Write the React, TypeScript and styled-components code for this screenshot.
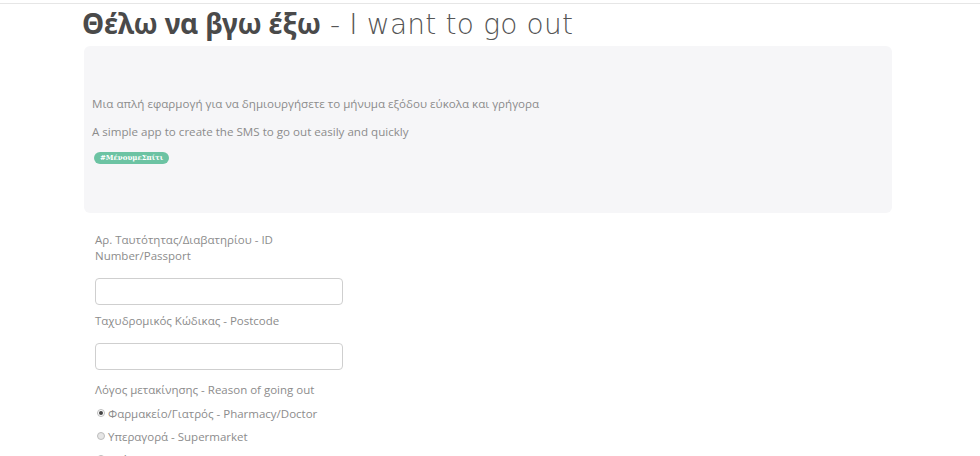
import styled, { createGlobalStyle } from 'styled-components';

const GlobalStyle = createGlobalStyle`
  html, body {
    margin: 0;
    padding: 0;
    background: #fff;
    font-family: 'Open Sans', 'Noto Sans', sans-serif;
  }
`;

const TopLine = styled.div`
  height: 3px;
  border-bottom: 1px solid #e6e6e6;
`;

const Page = styled.div`
  padding: 0 88px 0 84px;
`;

const Title = styled.h1`
  margin: 1px 0 0 -2px;
  font-family: 'DejaVu Sans', 'Noto Sans', sans-serif;
  font-size: 28px;
  line-height: 36px;
  font-weight: 200;
  color: #555;
  letter-spacing: 0.2px;
`;

const TitleStrong = styled.span`
  font-family: 'Noto Sans', sans-serif;
  font-weight: 700;
  color: #4a4a4a;
  letter-spacing: -0.2px;
`;

const Jumbotron = styled.div`
  margin-top: 3px;
  height: 167px;
  box-sizing: border-box;
  padding: 50px 8px 0;
  background: #f6f6f8;
  border-radius: 6px;
`;

const Lead = styled.p`
  margin: 0 0 13px;
  font-size: 11.6px;
  line-height: 15px;
  color: #8c8c8c;
`;

const Tag = styled.span`
  display: block;
  width: fit-content;
  margin: 3px 0 0 2px;
  padding: 0 6px;
  height: 12px;
  line-height: 12px;
  border-radius: 6px;
  background: #6cc3a3;
  color: #fff;
  font-family: 'DejaVu Serif', serif;
  font-weight: 700;
  font-size: 7px;
`;

const Form = styled.form`
  width: 248px;
  padding: 19px 0 0 11px;
  display: flex;
  flex-direction: column;
`;

const Label = styled.label<{ $gap?: number }>`
  margin-top: ${(p) => p.$gap ?? 0}px;
  font-size: 11.5px;
  line-height: 16px;
  color: #8c8c8c;
`;

const Input = styled.input`
  margin: 14px 0 8px;
  height: 27px;
  box-sizing: border-box;
  border: 1px solid #cfcfcf;
  border-radius: 4px;
  width: 248px;
`;

const RadioRow = styled.div`
  display: flex;
  align-items: center;
  gap: 3px;
  margin-top: 7px;
  height: 16px;
  font-size: 11.5px;
  color: #8c8c8c;
`;

const Dot = styled.span<{ $checked?: boolean }>`
  width: 8px;
  height: 8px;
  margin-left: 2px;
  border-radius: 50%;
  box-sizing: border-box;
  border: 1px solid #bdbdbd;
  background: ${(p) => (p.$checked ? '#fff' : '#e6e6e6')};
  position: relative;
  &::after {
    content: '';
    display: ${(p) => (p.$checked ? 'block' : 'none')};
    position: absolute;
    left: 1px;
    top: 1px;
    width: 4px;
    height: 4px;
    border-radius: 50%;
    background: #444;
  }
`;

const reasons = [
  { name: 'Φαρμακείο/Γιατρός - Pharmacy/Doctor', checked: true },
  { name: 'Υπεραγορά - Supermarket', checked: false },
  { name: 'Τράπεζα - Bank', checked: false },
];

const App = () => {
  return (
    <>
      <GlobalStyle />
      <TopLine />
      <Page>
        <Title>
          <TitleStrong>Θέλω να βγω έξω</TitleStrong> - I want to go out
        </Title>
        <Jumbotron>
          <Lead>Μια απλή εφαρμογή για να δημιουργήσετε το μήνυμα εξόδου εύκολα και γρήγορα</Lead>
          <Lead>A simple app to create the SMS to go out easily and quickly</Lead>
          <Tag>#ΜένουμεΣπίτι</Tag>
        </Jumbotron>
        <Form>
          <Label>Αρ. Ταυτότητας/Διαβατηρίου - ID Number/Passport</Label>
          <Input />
          <Label>Ταχυδρομικός Κώδικας - Postcode</Label>
          <Input />
          <Label $gap={4}>Λόγος μετακίνησης - Reason of going out</Label>
          {reasons.map((r) => (
            <RadioRow key={r.name}>
              <Dot $checked={r.checked} />
              {r.name}
            </RadioRow>
          ))}
        </Form>
      </Page>
    </>
  );
};

export default App;
